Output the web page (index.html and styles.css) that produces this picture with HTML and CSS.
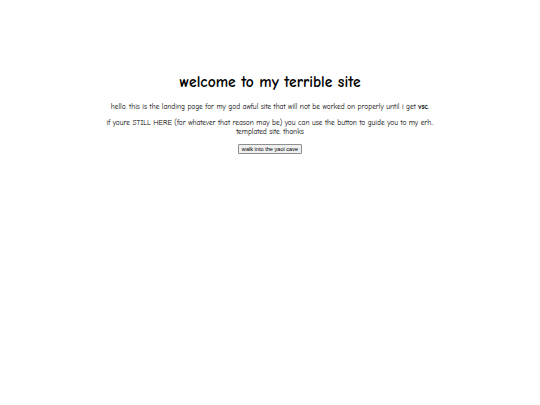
FILE: index.html
```html
<!DOCTYPE html>
<html>
<head>
<meta charset="utf-8">
<link rel="stylesheet" href="styles.css">
</head>
<body>
<main class="page">
  <h1 class="title">welcome to my terrible site</h1>
  <p class="text">hello. this is the landing page for my god awful site that will not be worked on properly until i get <b>vsc</b>.</p>
  <p class="text last">if youre STILL HERE (for whatever that reason may be) you can use the button to guide you to my erh..<br>templated site. thanks</p>
  <button class="btn">walk into the yaoi cave</button>
</main>
</body>
</html>
```
FILE: styles.css
```css
html, body {
  margin: 0;
  padding: 0;
  background: #ffffff;
}
.page {
  display: flex;
  flex-direction: column;
  align-items: center;
  padding-top: 72px;
  font-family: "Comic Sans MS", "Comic Neue", "Comic Relief", cursive, sans-serif;
  color: #000;
  text-align: center;
}
.title {
  margin: 0 0 10px;
  font-size: 15.5px;
  font-weight: bold;
  line-height: 20px;
}
.text {
  margin: 0 0 7px;
  font-size: 7.4px;
  line-height: 9px;
}
.text.last {
  margin-bottom: 8px;
}
.btn {
  margin: 0;
  font-family: "Liberation Sans", Arial, sans-serif;
  font-size: 5.6px;
  line-height: 6px;
  padding: 1px 3px;
  background: #efefef;
  border: 1px solid #8f8f8f;
  border-radius: 1px;
  color: #000;
}
```
